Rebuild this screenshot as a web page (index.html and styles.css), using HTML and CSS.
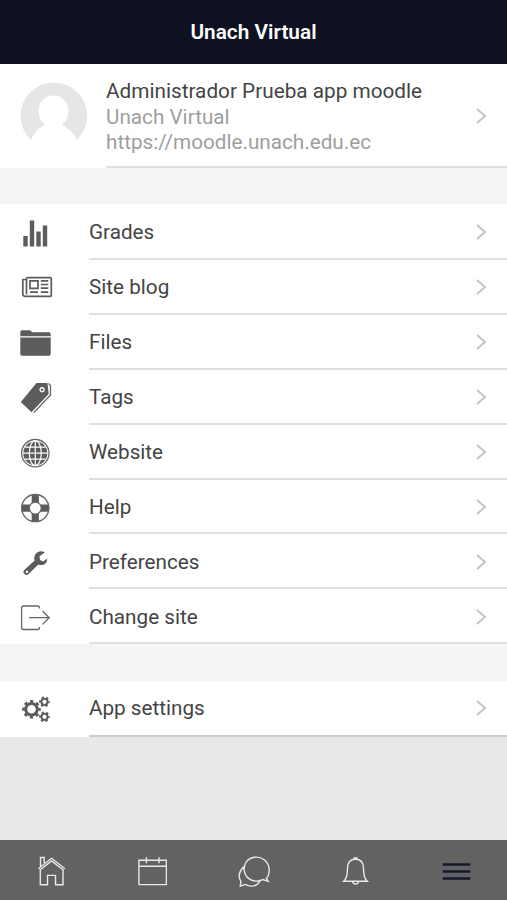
FILE: index.html
```html
<!DOCTYPE html>
<html lang="en">
<head>
<meta charset="utf-8">
<title>Unach Virtual</title>
<link rel="stylesheet" href="styles.css">
</head>
<body>
<div class="app">
  <header class="header"><h1>Unach Virtual</h1></header>
  <main class="content">
    <a class="profile">
      <svg class="avatar" viewBox="20 -2 68 103">
        <path d="M31 74A33.3 33.3 0 1 1 76.700 74Q71.500 63 61.500 58.700Q68.500 54 68.500 44.500A15 15 0 0 0 38.500 44.500Q38.500 54 45 58.700Q35.500 63 31 74Z"/>
      </svg>
      <div class="profile-body">
        <div class="profile-text">
          <h2>Administrador Prueba app moodle</h2>
          <p>Unach Virtual</p>
          <p>https://moodle.unach.edu.ec</p>
        </div>
        <svg class="chevron" viewBox="0 0 12 18"><path d="M2 2l8 7-8 7"/></svg>
      </div>
    </a>
    <nav class="list">
      <a class="row">
        <svg class="icon" viewBox="15 0 40 54"><path d="M23.300 31h4.400v10.500h-4.400zM29.800 15.500h4.400v26h-4.400zM36.300 26.500h4.400v15h-4.400zM42.800 20.500h4.400v21h-4.400z"/></svg>
        <div class="row-body"><span>Grades</span><svg class="chevron" viewBox="0 0 12 18"><path d="M2 2l8 7-8 7"/></svg></div>
      </a>
      <a class="row">
        <svg class="icon line" viewBox="15 0 40 54"><path stroke-width="1.700" d="M26.500 17.700h23.800q1 0 1 1v16.600q0 1-1 1H25q-2.200 0-2.200-2.200V19.500h3.700M26.500 17.700v16.800M30 20.800h8v7.500h-8zM40.800 20.800h7.500M40.800 24.500h7.500M40.800 28.200h7.500M30 32.200h8M40.800 32.200h7.500"/></svg>
        <div class="row-body"><span>Site blog</span><svg class="chevron" viewBox="0 0 12 18"><path d="M2 2l8 7-8 7"/></svg></div>
      </a>
      <a class="row">
        <svg class="icon" viewBox="15 0 40 54"><path d="M20.300 21.300V17q0-1.700 1.700-1.700h7.500q1.200 0 1.700 1t1.500 1H49q1.700 0 1.700 1.700v2.300zM20.300 22.600h30.400v16.400q0 1.700-1.700 1.700H22q-1.700 0-1.700-1.700z"/></svg>
        <div class="row-body"><span>Files</span><svg class="chevron" viewBox="0 0 12 18"><path d="M2 2l8 7-8 7"/></svg></div>
      </a>
      <a class="row">
        <svg class="icon" viewBox="15 0 40 54"><path fill-rule="evenodd" d="M36.500 12.900L47.500 13.100 48.700 24 31.500 42.300 20.800 32zM42 17a2.700 2.700 0 1 0 .1 0z"/><circle cx="42" cy="19.700" r="1.300"/><path class="thin" d="M48.500 13.500l2 2v9.500L34 42.500"/></svg>
        <div class="row-body"><span>Tags</span><svg class="chevron" viewBox="0 0 12 18"><path d="M2 2l8 7-8 7"/></svg></div>
      </a>
      <a class="row">
        <svg class="icon" viewBox="15 0 40 54"><circle class="thin" cx="35.300" cy="28.200" r="13.700"/><circle cx="35.300" cy="28.200" r="12"/><g class="cut"><path d="M35.300 16v25M23 28.200h24.600M25 22.200h20.600M25 34.200h20.600"/><ellipse cx="35.300" cy="28.200" rx="6" ry="12.500"/></g></svg>
        <div class="row-body"><span>Website</span><svg class="chevron" viewBox="0 0 12 18"><path d="M2 2l8 7-8 7"/></svg></div>
      </a>
      <a class="row">
        <svg class="icon" viewBox="15 0 40 54"><path d="M31.700 14.400h7.200v9h-7.200zM31.700 32.900h7.200v9h-7.200zM21.600 24.500h9v7.200h-9zM40 24.500h9v7.200h-9z"/><circle class="thin" cx="35.300" cy="28.100" r="13.600"/><circle class="thin ring" cx="35.300" cy="28.100" r="6"/></svg>
        <div class="row-body"><span>Help</span><svg class="chevron" viewBox="0 0 12 18"><path d="M2 2l8 7-8 7"/></svg></div>
      </a>
      <a class="row">
        <svg class="icon" viewBox="15 0 40 54"><path fill-rule="evenodd" d="M45 18.300L39.500 22.200 40 26 43.300 27.400 47.200 24.500Q47.300 29 44 30.500 41 31.700 38.300 30.500L28.300 40.300Q26.500 41.700 24.600 40 22.400 38 24 36.200L34.600 26.500Q33.300 22.500 36.200 19.200 40 15.700 45 18.300ZM26.900 36.500a1.300 1.300 0 1 0 .1 0z"/></svg>
        <div class="row-body"><span>Preferences</span><svg class="chevron" viewBox="0 0 12 18"><path d="M2 2l8 7-8 7"/></svg></div>
      </a>
      <a class="row">
        <svg class="icon" viewBox="15 0 40 54"><path class="thin" d="M39.500 19.500v-.5q0-2-2-2H23.600q-2 0-2 2v19.500q0 2 2 2h13.900q2 0 2-2v-.5M29 28.700h20M42.500 22l6.700 6.700-6.700 6.700"/></svg>
        <div class="row-body"><span>Change site</span><svg class="chevron" viewBox="0 0 12 18"><path d="M2 2l8 7-8 7"/></svg></div>
      </a>
    </nav>
    <nav class="list settings">
      <a class="row">
        <svg class="icon gears" viewBox="15 0 40 54">
          <circle cx="31.500" cy="27.300" r="5.800" stroke-width="3"/><circle cx="31.500" cy="27.300" r="8" stroke-width="2.600" stroke-dasharray="3.142 3.142" stroke-dashoffset="1.570"/>
          <circle cx="44.500" cy="19.800" r="3.100" stroke-width="2"/><circle cx="44.500" cy="19.800" r="4.500" stroke-width="1.800" stroke-dasharray="2.200 2.512" stroke-dashoffset="1.100"/>
          <circle cx="44.500" cy="34.800" r="3.100" stroke-width="2"/><circle cx="44.500" cy="34.800" r="4.500" stroke-width="1.800" stroke-dasharray="2.200 2.512" stroke-dashoffset="1.100"/>
        </svg>
        <div class="row-body"><span>App settings</span><svg class="chevron" viewBox="0 0 12 18"><path d="M2 2l8 7-8 7"/></svg></div>
      </a>
    </nav>
  </main>
  <nav class="tabs">
    <a><svg viewBox="36 0 30 60"><path d="M38.300 28.700L51.500 18.300 65 28.700M40.500 26.500v-9h3.700v5.500M40.300 29v15.700h7.200V35.400h8v9.300h7.500V29M39.700 30.300L51.500 21 63.700 30.300"/></svg></a>
    <a><svg viewBox="137.300 0 30 60"><path d="M139.200 20.300h27.500v24.300h-27.500zM139.200 26.300h27.500M146.700 17.300v6M159.300 17.300v6"/></svg></a>
    <a><svg viewBox="237.300 0 34 60"><path d="M244.500 26.500C239 31 238.200 37 241.300 41.500L240.500 46.100 245.500 44.400C251 47.700 257.500 46 260 41.300M266.700 38.700C271.200 33 270.200 24 264.500 19.700 258.500 15.200 249.500 16.700 246 23 242.500 29.500 245 37 251.500 40 255.500 41.600 259.500 41.400 263 39.600L268.500 41.300Z"/></svg></a>
    <a><svg viewBox="340 0 30 60"><path d="M343.700 41.300C347.500 38 347.500 33 347.500 28.500 347.500 22.500 350.500 19.300 355.500 19.300S363.500 22.500 363.500 28.500C363.500 33 363.500 38 367.300 41.300ZM354 19v-1h3v1M352.500 41.600a3.200 3.200 0 0 0 6.200 0"/></svg></a>
    <a class="active"><svg viewBox="441.500 0.700 30 60"><path d="M443.300 25.200h27.500M443.300 32.200h27.500M443.300 39.200h27.500"/></svg></a>
  </nav>
</div>
</body>
</html>
```

FILE: styles.css
```css
* { box-sizing: border-box; }

body {
  margin: 0;
  font-family: Roboto, "Liberation Sans", sans-serif;
  color: #444;
}

.app {
  display: flex;
  flex-direction: column;
  height: 900px;
  background: #e8e8e8;
}

.header {
  display: flex;
  align-items: center;
  justify-content: center;
  height: 64px;
  background: #0e1120;
}

h1, h2, p { margin: 0; }

h1 {
  color: #fff;
  font-size: 20.8px;
  font-weight: 600;
  line-height: 24px;
}

.content { flex: 1; }

.profile {
  display: flex;
  height: 104px;
  padding-left: 20px;
  background: #fff;
}

.avatar {
  width: 68px;
  height: 103px;
  fill: #e6e6e6;
}

.profile-body {
  flex: 1;
  display: flex;
  align-items: center;
  justify-content: space-between;
  margin-left: 18px;
  padding: 2px 20px 0 0;
  border-bottom: 2px solid #e0e0e0;
}

.profile-text { padding-top: 1px; }

h2 {
  font-size: 20.75px;
  font-weight: 400;
  line-height: 27px;
}

.profile-text p {
  color: #9e9e9e;
  font-size: 20.7px;
  line-height: 25px;
}

.list {
  padding-top: 1px;
  background: #fff;
  border-top: 36px solid #f5f5f5;
}

.settings {
  padding-top: 0;
  border-top-width: 38px;
}

.row {
  display: flex;
  height: 54.92px;
  padding-left: 15px;
}

.icon {
  width: 40px;
  height: 54px;
  fill: #5c5c5c;
}

.line, .gears {
  fill: none;
  stroke: #5c5c5c;
}

.thin {
  fill: none;
  stroke: #666;
  stroke-width: 1.3;
}

.ring { fill: #fff; }

.cut {
  fill: none;
  stroke: #fff;
  stroke-width: 1.2;
}

.row-body {
  flex: 1;
  display: flex;
  align-items: center;
  justify-content: space-between;
  margin-left: 34px;
  padding: 1.5px 20px 0 0;
  border-bottom: 2px solid #e0e0e0;
  font-size: 20.7px;
}

.settings .row-body {
  padding: 0 20px 1px 0;
  border-bottom-color: #ccc;
}

.chevron {
  width: 12px;
  height: 18px;
  fill: none;
  stroke: #c4c4c4;
  stroke-width: 2;
}

.tabs {
  display: flex;
  height: 60px;
  background: #626262;
}

.tabs a {
  flex: 1;
  display: flex;
  justify-content: center;
}

.tabs svg {
  height: 60px;
  fill: none;
  stroke: #e8e8e8;
  stroke-width: 1.4;
}

.tabs .active svg {
  stroke: #15182a;
  stroke-width: 2.4;
}
```
